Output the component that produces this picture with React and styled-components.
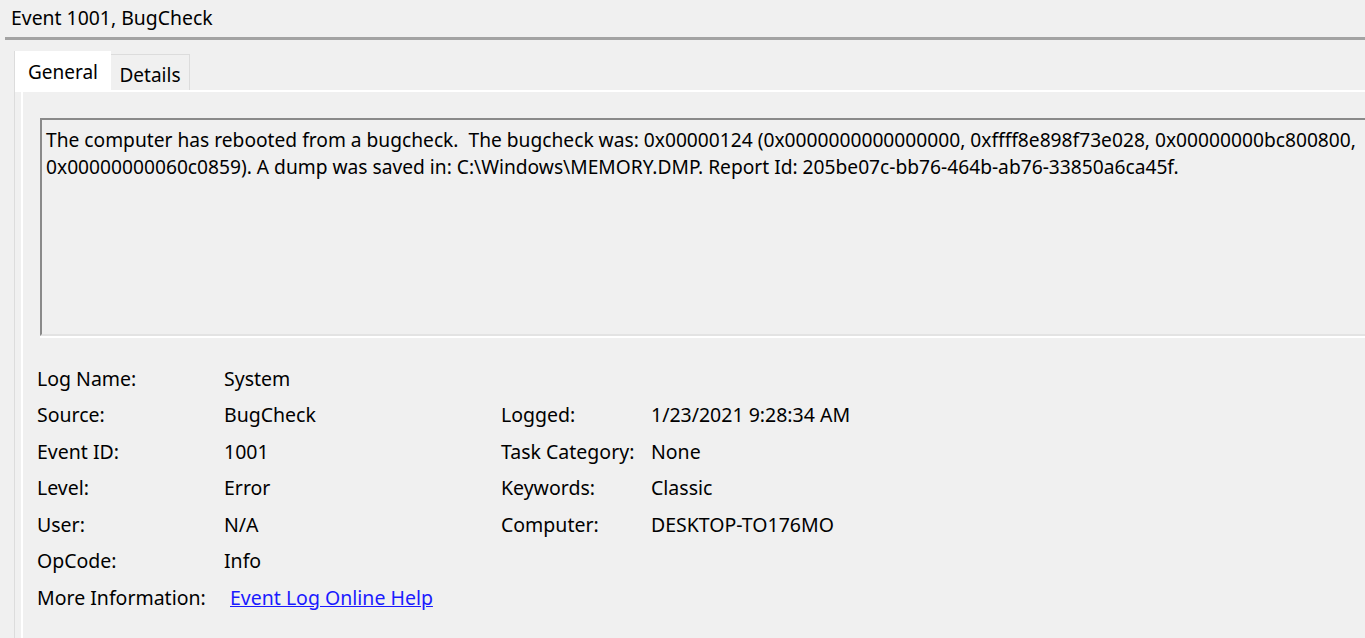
import React from 'react';
import styled, { createGlobalStyle } from 'styled-components';

const GlobalStyle = createGlobalStyle`
    html, body {
        margin: 0;
        padding: 0;
        background: #f0f0f0;
        overflow: hidden;
    }
    body {
        font-family: "Segoe UI", "Noto Sans", "Open Sans", sans-serif;
        color: #000;
    }
`;

/* Data ---------------------------*/
const fields = [
    { label: 'Log Name:', value: 'System' },
    { label: 'Source:', value: 'BugCheck', label2: 'Logged:', value2: '1/23/2021 9:28:34 AM' },
    { label: 'Event ID:', value: '1001', label2: 'Task Category:', value2: 'None' },
    { label: 'Level:', value: 'Error', label2: 'Keywords:', value2: 'Classic' },
    { label: 'User:', value: 'N/A', label2: 'Computer:', value2: 'DESKTOP-TO176MO' },
    { label: 'OpCode:', value: 'Info' },
];

const App = () => {
    return (
        <Window className='EventProperties'>
            <GlobalStyle />
            <TitleBar>Event 1001, BugCheck</TitleBar>
            <Divider />
            <TabControl>
                <TabStrip>
                    <Tab $active>General</Tab>
                    <Tab>Details</Tab>
                </TabStrip>
                <TabPage>
                    <Description>
                        The computer has rebooted from a bugcheck.  The bugcheck was: 0x00000124 (0x0000000000000000, 0xffff8e898f73e028, 0x00000000bc800800,
                        <br />
                        0x00000000060c0859). A dump was saved in: C:\Windows\MEMORY.DMP. Report Id: 205be07c-bb76-464b-ab76-33850a6ca45f.
                    </Description>
                    <Fields>
                        {fields.map((f) => (
                            <React.Fragment key={f.label}>
                                <Label>{f.label}</Label>
                                <Value>{f.value}</Value>
                                <Label>{f.label2 || ''}</Label>
                                <Value>{f.value2 || ''}</Value>
                            </React.Fragment>
                        ))}
                        <Label>More Information:</Label>
                        <Value $wide>
                            <HelpLink href="#">Event Log Online Help</HelpLink>
                        </Value>
                    </Fields>
                </TabPage>
            </TabControl>
        </Window>
    );
};

export default App;

/* Styles ---------------------------*/
const Window = styled.div`
    width: 1365px;
    height: 638px;
    overflow: hidden;
    display: flex;
    flex-direction: column;
`;

const TitleBar = styled.div`
    height: 37px;
    line-height: 36px;
    padding-left: 11px;
    font-size: 19.4px;
    box-sizing: border-box;
`;

const Divider = styled.div`
    height: 3px;
    margin-left: 5px;
    background: #a3a3a3;
    flex-shrink: 0;
`;

const TabControl = styled.div`
    flex: 1;
    margin: 11px 0 0 14px;
    border-left: 1px solid #dcdcdc;
    display: flex;
    flex-direction: column;
`;

const TabStrip = styled.div`
    display: flex;
    align-items: flex-end;
    height: 39px;
    position: relative;
    z-index: 1;
`;

const Tab = styled.div`
    box-sizing: border-box;
    font-size: 19px;
    display: flex;
    align-items: center;
    justify-content: center;
    height: ${(p) => (p.$active ? '41px' : '36px')};
    margin-bottom: ${(p) => (p.$active ? '-2px' : '0')};
    width: ${(p) => (p.$active ? '96px' : '79px')};
    padding-top: ${(p) => (p.$active ? '0' : '4px')};
    background: ${(p) => (p.$active ? '#ffffff' : '#f0f0f0')};
    border-top: ${(p) => (p.$active ? 'none' : '1px solid #dcdcdc')};
    border-right: ${(p) => (p.$active ? 'none' : '1px solid #dcdcdc')};
`;

const TabPage = styled.div`
    flex: 1;
    margin-left: 6px;
    margin-right: -40px;
    border-top: 2px solid #ffffff;
    border-left: 2px solid #ffffff;
    padding: 26px 0 0 17px;
`;

const Description = styled.div`
    box-sizing: border-box;
    height: 218px;
    border-top: 2px solid #8a8a8a;
    border-left: 2px solid #8a8a8a;
    border-bottom: 2px solid #e3e3e3;
    box-shadow: 0 2px 0 #ffffff;
    padding: 6px 0 0 4px;
    font-size: 19.2px;
    line-height: 27px;
    white-space: pre-wrap;
    overflow: hidden;
`;

const Fields = styled.div`
    display: grid;
    grid-template-columns: 187px 277px 150px 1fr;
    grid-auto-rows: 36.5px;
    align-items: center;
    margin: 24px 0 0 -3px;
    font-size: 19.5px;
`;

const Label = styled.div`
    white-space: nowrap;
`;

const Value = styled.div`
    white-space: nowrap;
    grid-column: ${(p) => (p.$wide ? 'span 3' : 'auto')};
    padding-left: ${(p) => (p.$wide ? '6px' : '0')};
`;

const HelpLink = styled.a`
    color: #1a1aff;
    text-decoration: underline;
`;
